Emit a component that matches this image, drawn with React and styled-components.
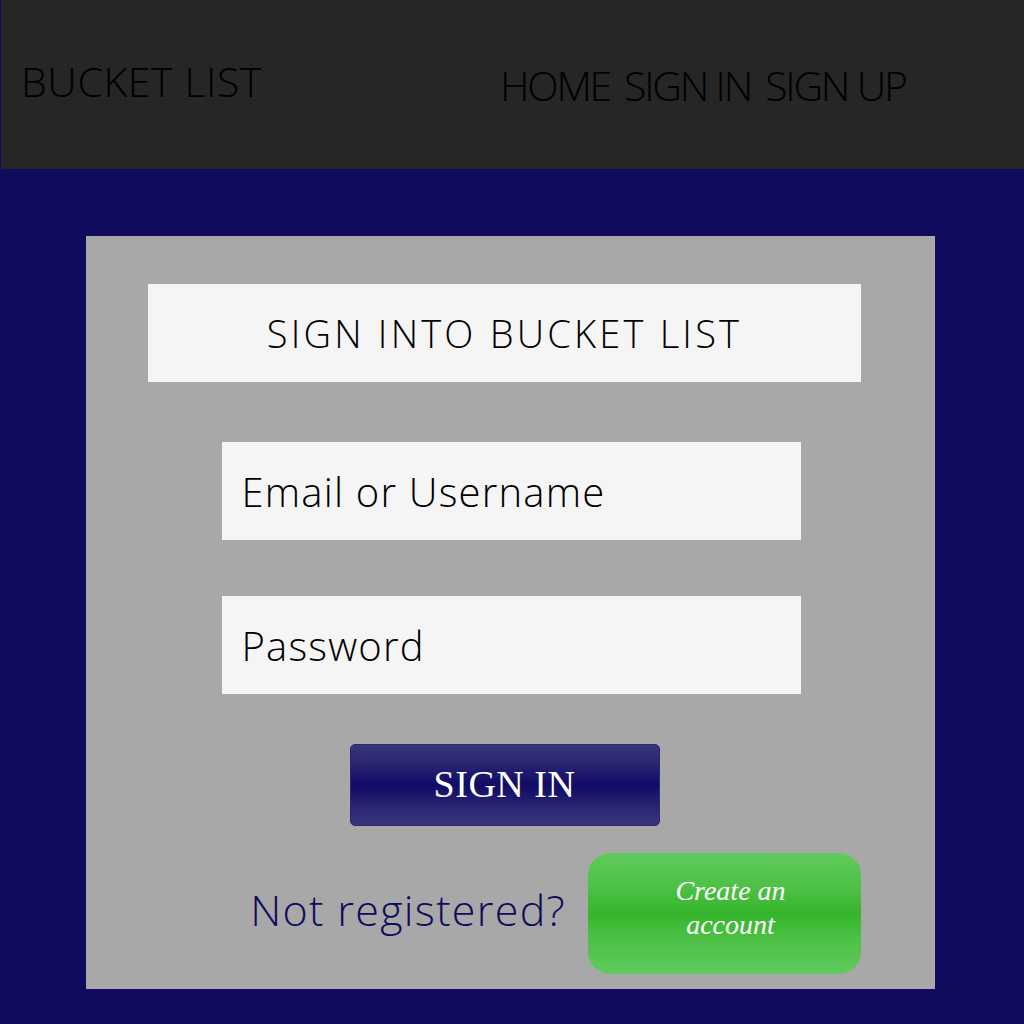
import styled, { createGlobalStyle } from "styled-components";

const GlobalStyle = createGlobalStyle`
  html, body {
    margin: 0;
    padding: 0;
    background: #100b5e;
  }
  body {
    font-family: "Open Sans", "Liberation Sans", sans-serif;
  }
`;

const Page = styled.div`
  width: 1024px;
  min-height: 1024px;
  background: #100b5e;
  display: flex;
  flex-direction: column;
`;

const Header = styled.header`
  height: 169px;
  margin-left: 1px;
  background: #262626;
  display: flex;
  align-items: center;
  padding: 0 0 0 20px;
  box-sizing: border-box;
`;

const Brand = styled.div`
  width: 479px;
  font-size: 41px;
  font-weight: 300;
  color: #000;
  letter-spacing: 0.6px;
  margin-top: -8px;
`;

const Nav = styled.nav`
  display: flex;
  gap: 14px;
`;

const NavLink = styled.a`
  font-size: 41px;
  font-weight: 300;
  color: #000;
  letter-spacing: -2.2px;
  text-decoration: none;
`;

const Main = styled.main`
  padding: 67px 89px 35px 86px;
`;

const Card = styled.section`
  background: #a8a8a8;
  height: 753px;
  box-sizing: border-box;
  padding: 48px 74px 15px 62px;
  display: flex;
  flex-direction: column;
  align-items: center;
`;

const TitleBox = styled.div`
  width: 713px;
  height: 98px;
  background: #f5f5f5;
  display: flex;
  align-items: center;
  justify-content: center;
  font-size: 38px;
  font-weight: 300;
  color: #000;
  letter-spacing: 3.2px;
`;

const Field = styled.input`
  width: 579px;
  height: 98px;
  box-sizing: border-box;
  margin-top: ${p => p.gap}px;
  margin-left: 13px;
  padding: 0 20px;
  border: none;
  outline: none;
  background: #f5f5f5;
  font-family: "Open Sans", "Liberation Sans", sans-serif;
  font-size: 40px;
  font-weight: 300;
  letter-spacing: 1.2px;
  color: #000;
  &::placeholder {
    color: #000;
    opacity: 1;
  }
`;

const SignInButton = styled.button`
  margin-top: 50px;
  width: 310px;
  height: 82px;
  border: 1px solid #2a2670;
  border-radius: 5px;
  background: linear-gradient(
    to bottom,
    #39357c 0%,
    #272370 25%,
    #100b66 50%,
    #272370 75%,
    #39357c 100%
  );
  color: #fff;
  font-family: "Liberation Serif", "DejaVu Serif", serif;
  font-size: 38px;
  letter-spacing: 0.5px;
  padding-bottom: 4px;
  cursor: pointer;
`;

const Footer = styled.div`
  width: 713px;
  margin-top: 27px;
  display: flex;
  justify-content: flex-end;
  align-items: center;
  gap: 22px;
`;

const Prompt = styled.span`
  font-size: 43px;
  font-weight: 300;
  letter-spacing: 1.3px;
  color: #100b5e;
  margin-top: -8px;
`;

const CreateButton = styled.button`
  width: 273px;
  height: 121px;
  border: none;
  border-radius: 22px;
  background: linear-gradient(
    to bottom,
    #60ca5e 0%,
    #4cc044 30%,
    #35b52b 50%,
    #4cc044 70%,
    #60ca5e 100%
  );
  color: #fff;
  font-family: "Liberation Serif", "DejaVu Serif", cursive;
  font-style: italic;
  font-size: 28px;
  line-height: 34px;
  padding: 0 62px 12px 74px;
  cursor: pointer;
`;

const App = () => {
  return (
    <Page>
      <GlobalStyle />
      <Header>
        <Brand>BUCKET LIST</Brand>
        <Nav>
          <NavLink href="#">HOME</NavLink>
          <NavLink href="#">SIGN IN</NavLink>
          <NavLink href="#">SIGN UP</NavLink>
        </Nav>
      </Header>
      <Main>
        <Card>
          <TitleBox>SIGN INTO BUCKET LIST</TitleBox>
          <Field gap={60} placeholder="Email or Username" />
          <Field gap={56} type="password" placeholder="Password" />
          <SignInButton>SIGN IN</SignInButton>
          <Footer>
            <Prompt>Not registered?</Prompt>
            <CreateButton>Create an account</CreateButton>
          </Footer>
        </Card>
      </Main>
    </Page>
  );
};

export default App;
